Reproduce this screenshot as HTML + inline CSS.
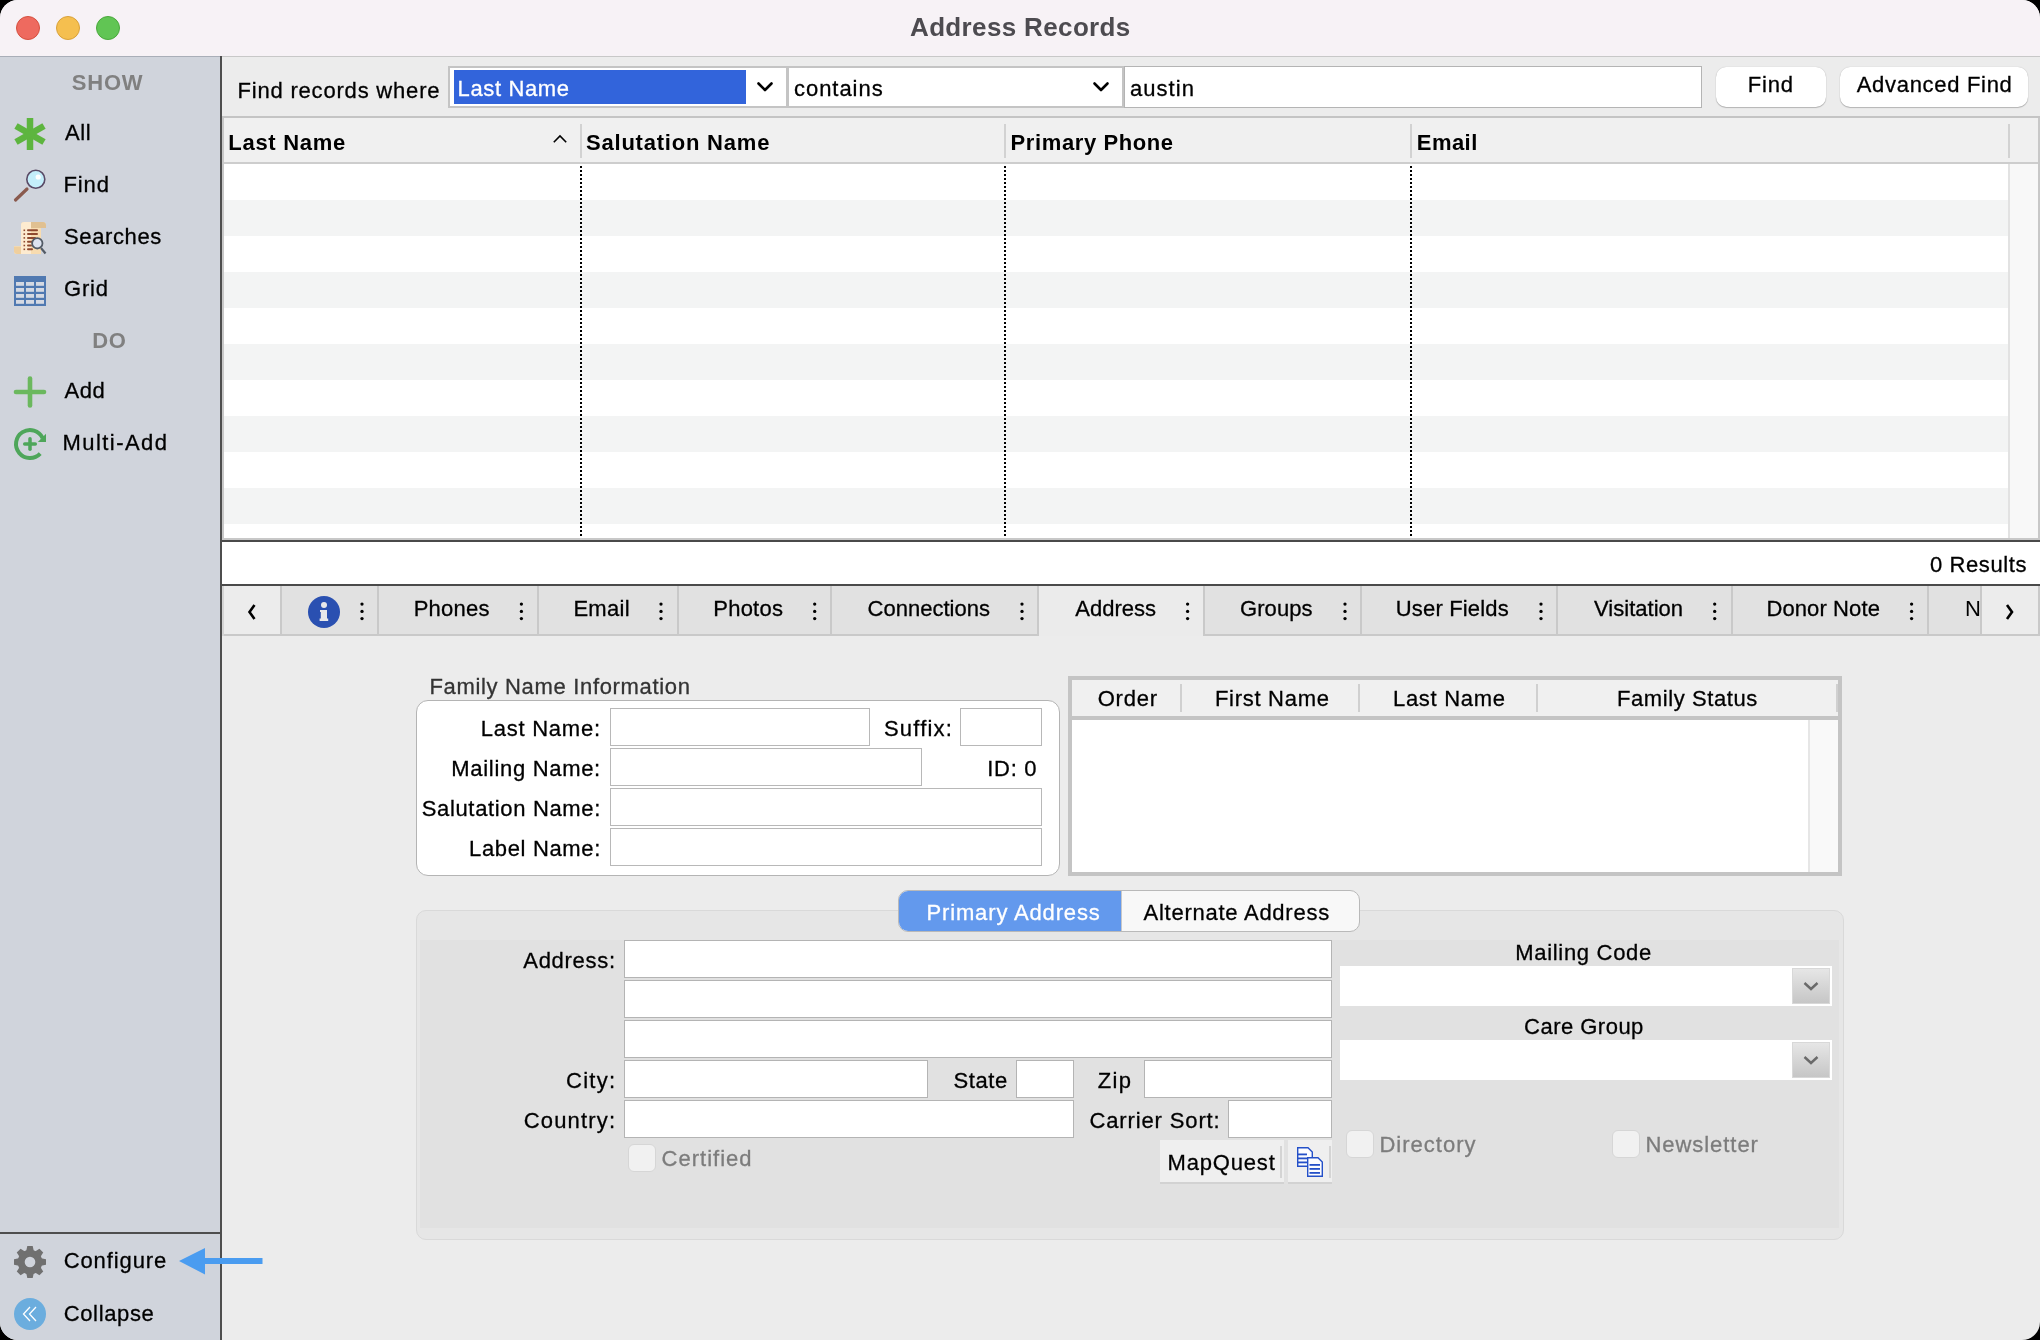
<!DOCTYPE html><html><head><meta charset="utf-8"><style>
html,body{margin:0;padding:0;}
body{width:2040px;height:1340px;background:#000;position:relative;overflow:hidden;font-family:'Liberation Sans',sans-serif;}
#w{position:absolute;left:0;top:0;width:2040px;height:1340px;border-radius:18px;overflow:hidden;background:#ececec;}
</style></head><body><div id="w">
<div style="position:absolute;left:0px;top:0px;width:2040px;height:56px;background:#f7f2f6"></div>
<div style="position:absolute;left:0px;top:56px;width:2040px;height:1px;background:#c8c8c8"></div>
<div style="position:absolute;left:0px;top:56px;width:220px;height:1px;background:#a9aeb8"></div>
<div style="position:absolute;left:16px;top:16px;width:24px;height:24px;border-radius:50%;background:#ee6a5f;box-sizing:border-box;border:1px solid #d5503f"></div>
<div style="position:absolute;left:56px;top:16px;width:24px;height:24px;border-radius:50%;background:#f5bf4f;box-sizing:border-box;border:1px solid #d8a13a"></div>
<div style="position:absolute;left:96px;top:16px;width:24px;height:24px;border-radius:50%;background:#61c554;box-sizing:border-box;border:1px solid #4aa83c"></div>
<div style="position:absolute;left:0px;top:57px;width:220px;height:1283px;background:#d0d4dc"></div>
<div style="position:absolute;left:220px;top:56px;width:2px;height:1284px;background:#4e4e4e"></div>
<div style="position:absolute;left:0px;top:1232px;width:220px;height:2px;background:#4e4e4e"></div>
<div style="position:absolute;left:222px;top:57px;width:1818px;height:59px;background:#ececec"></div>
<div style="position:absolute;left:222px;top:116px;width:1818px;height:2px;background:#c4c4c4"></div>
<div style="position:absolute;left:448px;top:66px;width:340px;height:42px;background:#fff;border:2px solid #c4c4c4;box-sizing:border-box"></div>
<div style="position:absolute;left:787px;top:66px;width:337px;height:42px;background:#fff;border:2px solid #c4c4c4;box-sizing:border-box"></div>
<div style="position:absolute;left:454px;top:70px;width:292px;height:34px;background:#3264db"></div>
<div style="position:absolute;left:1124px;top:66px;width:578px;height:42px;background:#fff;border:1.5px solid #b4b4b4;box-sizing:border-box"></div>
<svg style="position:absolute;left:0;top:0" width="1200" height="120">
<path d="M758.5 83.5 L765 90 L771.5 83.5" fill="none" stroke="#000" stroke-width="2.6" stroke-linecap="round" stroke-linejoin="round"/>
<path d="M1094.5 83.5 L1101 90 L1107.5 83.5" fill="none" stroke="#000" stroke-width="2.6" stroke-linecap="round" stroke-linejoin="round"/>
</svg>
<div style="position:absolute;left:1716px;top:66.5px;width:110px;height:40.5px;background:#fff;border-radius:10px;box-shadow:0 1px 1px rgba(0,0,0,0.22), 0 0 1px rgba(0,0,0,0.25)"></div>
<div style="position:absolute;left:1840px;top:66.5px;width:188px;height:40.5px;background:#fff;border-radius:10px;box-shadow:0 1px 1px rgba(0,0,0,0.22), 0 0 1px rgba(0,0,0,0.25)"></div>
<div style="position:absolute;left:222px;top:118px;width:1818px;height:44px;background:#f0f0f0"></div>
<div style="position:absolute;left:222px;top:162px;width:1818px;height:2px;background:#cdcdcd"></div>
<div style="position:absolute;left:224px;top:164px;width:1784px;height:36px;background:#ffffff"></div>
<div style="position:absolute;left:224px;top:200px;width:1784px;height:36px;background:#f3f4f4"></div>
<div style="position:absolute;left:224px;top:236px;width:1784px;height:36px;background:#ffffff"></div>
<div style="position:absolute;left:224px;top:272px;width:1784px;height:36px;background:#f3f4f4"></div>
<div style="position:absolute;left:224px;top:308px;width:1784px;height:36px;background:#ffffff"></div>
<div style="position:absolute;left:224px;top:344px;width:1784px;height:36px;background:#f3f4f4"></div>
<div style="position:absolute;left:224px;top:380px;width:1784px;height:36px;background:#ffffff"></div>
<div style="position:absolute;left:224px;top:416px;width:1784px;height:36px;background:#f3f4f4"></div>
<div style="position:absolute;left:224px;top:452px;width:1784px;height:36px;background:#ffffff"></div>
<div style="position:absolute;left:224px;top:488px;width:1784px;height:36px;background:#f3f4f4"></div>
<div style="position:absolute;left:224px;top:524px;width:1784px;height:14px;background:#ffffff"></div>
<div style="position:absolute;left:222px;top:118px;width:2px;height:422px;background:#c8c8c8"></div>
<div style="position:absolute;left:2008px;top:164px;width:2px;height:374px;background:#e2e2e2"></div>
<div style="position:absolute;left:2010px;top:164px;width:28px;height:374px;background:#f8f8f8"></div>
<div style="position:absolute;left:2038px;top:118px;width:2px;height:422px;background:#c8c8c8"></div>
<div style="position:absolute;left:580px;top:124px;width:2px;height:34px;background:#d2d2d2"></div>
<div style="position:absolute;left:580px;top:166px;width:2px;height:370px;background:repeating-linear-gradient(180deg,#000 0 2px,transparent 2px 4px)"></div>
<div style="position:absolute;left:1004px;top:124px;width:2px;height:34px;background:#d2d2d2"></div>
<div style="position:absolute;left:1004px;top:166px;width:2px;height:370px;background:repeating-linear-gradient(180deg,#000 0 2px,transparent 2px 4px)"></div>
<div style="position:absolute;left:1410px;top:124px;width:2px;height:34px;background:#d2d2d2"></div>
<div style="position:absolute;left:1410px;top:166px;width:2px;height:370px;background:repeating-linear-gradient(180deg,#000 0 2px,transparent 2px 4px)"></div>
<div style="position:absolute;left:2008px;top:124px;width:2px;height:34px;background:#d2d2d2"></div>
<svg style="position:absolute;left:540px;top:120px" width="40" height="40"><path d="M13.8 22.2 L20 16 L26.2 22.2" fill="none" stroke="#000" stroke-width="1.6"/></svg>
<div style="position:absolute;left:222px;top:538px;width:1818px;height:2px;background:#c8c8c8"></div>
<div style="position:absolute;left:222px;top:540px;width:1818px;height:2px;background:#4a4a4a"></div>
<div style="position:absolute;left:222px;top:542px;width:1818px;height:42px;background:#fff"></div>
<div style="position:absolute;left:222px;top:584px;width:1818px;height:2px;background:#4a4a4a"></div>
<div style="position:absolute;left:222px;top:586px;width:1818px;height:48px;background:#e1e1e1"></div>
<div style="position:absolute;left:222px;top:634px;width:1818px;height:2px;background:#c9c9c9"></div>
<div style="position:absolute;left:224px;top:586px;width:56px;height:48px;background:#ececec"></div>
<div style="position:absolute;left:1982px;top:586px;width:56px;height:48px;background:#ececec"></div>
<div style="position:absolute;left:222px;top:586px;width:2px;height:50px;background:#d4d4d4"></div>
<div style="position:absolute;left:2038px;top:586px;width:2px;height:50px;background:#c9c9c9"></div>
<div style="position:absolute;left:1039px;top:586px;width:164px;height:50px;background:#ebebeb"></div>
<div style="position:absolute;left:280px;top:586px;width:2px;height:48px;background:#c9c9c9"></div>
<div style="position:absolute;left:377px;top:586px;width:2px;height:48px;background:#c9c9c9"></div>
<div style="position:absolute;left:537px;top:586px;width:2px;height:48px;background:#c9c9c9"></div>
<div style="position:absolute;left:677px;top:586px;width:2px;height:48px;background:#c9c9c9"></div>
<div style="position:absolute;left:830px;top:586px;width:2px;height:48px;background:#c9c9c9"></div>
<div style="position:absolute;left:1037px;top:586px;width:2px;height:48px;background:#c9c9c9"></div>
<div style="position:absolute;left:1203px;top:586px;width:2px;height:48px;background:#c9c9c9"></div>
<div style="position:absolute;left:1360px;top:586px;width:2px;height:48px;background:#c9c9c9"></div>
<div style="position:absolute;left:1556px;top:586px;width:2px;height:48px;background:#c9c9c9"></div>
<div style="position:absolute;left:1731px;top:586px;width:2px;height:48px;background:#c9c9c9"></div>
<div style="position:absolute;left:1927px;top:586px;width:2px;height:48px;background:#c9c9c9"></div>
<div style="position:absolute;left:1980px;top:586px;width:2px;height:48px;background:#c9c9c9"></div>
<svg style="position:absolute;left:0;top:0" width="2040" height="640"><g fill="#000"><circle cx="362" cy="604.1" r="1.65"/><circle cx="362" cy="611.4" r="1.65"/><circle cx="362" cy="618.6" r="1.65"/><circle cx="521.4" cy="604.1" r="1.65"/><circle cx="521.4" cy="611.4" r="1.65"/><circle cx="521.4" cy="618.6" r="1.65"/><circle cx="661" cy="604.1" r="1.65"/><circle cx="661" cy="611.4" r="1.65"/><circle cx="661" cy="618.6" r="1.65"/><circle cx="814.7" cy="604.1" r="1.65"/><circle cx="814.7" cy="611.4" r="1.65"/><circle cx="814.7" cy="618.6" r="1.65"/><circle cx="1022" cy="604.1" r="1.65"/><circle cx="1022" cy="611.4" r="1.65"/><circle cx="1022" cy="618.6" r="1.65"/><circle cx="1187.6" cy="604.1" r="1.65"/><circle cx="1187.6" cy="611.4" r="1.65"/><circle cx="1187.6" cy="618.6" r="1.65"/><circle cx="1345" cy="604.1" r="1.65"/><circle cx="1345" cy="611.4" r="1.65"/><circle cx="1345" cy="618.6" r="1.65"/><circle cx="1541" cy="604.1" r="1.65"/><circle cx="1541" cy="611.4" r="1.65"/><circle cx="1541" cy="618.6" r="1.65"/><circle cx="1714.7" cy="604.1" r="1.65"/><circle cx="1714.7" cy="611.4" r="1.65"/><circle cx="1714.7" cy="618.6" r="1.65"/><circle cx="1911.6" cy="604.1" r="1.65"/><circle cx="1911.6" cy="611.4" r="1.65"/><circle cx="1911.6" cy="618.6" r="1.65"/></g></svg>
<svg style="position:absolute;left:0;top:580px" width="2040" height="60">
<path d="M254.5 25 L249.5 32 L254.5 39" fill="none" stroke="#000" stroke-width="2.6"/>
<path d="M2007 25 L2012 32 L2007 39" fill="none" stroke="#000" stroke-width="2.6"/>
<circle cx="324" cy="32" r="16" fill="#2a50b1"/>
<circle cx="324" cy="25" r="3" fill="#e8e8ea"/>
<path d="M320 30 L327 30 L327 38.5 L328.2 38.5 L328.2 41 L319.6 41 L319.6 38.5 L320.8 38.5 L320.8 32 L320 32 Z" fill="#e8e8ea"/>
</svg>
<div style="position:absolute;left:416px;top:700px;width:644px;height:176px;background:#fff;border:1px solid #b4b4b4;border-radius:12px;box-sizing:border-box"></div>
<div style="position:absolute;left:610px;top:708px;width:260px;height:38px;background:#fff;border:1.5px solid #b8b8b8;box-sizing:border-box"></div>
<div style="position:absolute;left:960px;top:708px;width:82px;height:38px;background:#fff;border:1.5px solid #b8b8b8;box-sizing:border-box"></div>
<div style="position:absolute;left:610px;top:748px;width:312px;height:38px;background:#fff;border:1.5px solid #b8b8b8;box-sizing:border-box"></div>
<div style="position:absolute;left:610px;top:788px;width:432px;height:38px;background:#fff;border:1.5px solid #b8b8b8;box-sizing:border-box"></div>
<div style="position:absolute;left:610px;top:828px;width:432px;height:38px;background:#fff;border:1.5px solid #b8b8b8;box-sizing:border-box"></div>
<div style="position:absolute;left:1068px;top:676px;width:774px;height:200px;background:#fff;border:4px solid #c4c4c4;box-sizing:border-box"></div>
<div style="position:absolute;left:1072px;top:680px;width:766px;height:36px;background:#f0f0f0"></div>
<div style="position:absolute;left:1072px;top:716px;width:766px;height:4px;background:#c4c4c4"></div>
<div style="position:absolute;left:1808px;top:720px;width:2px;height:152px;background:#e6e6e6"></div>
<div style="position:absolute;left:1810px;top:720px;width:28px;height:152px;background:#f9f9f9"></div>
<div style="position:absolute;left:1180px;top:684px;width:2px;height:28px;background:#d0d0d0"></div>
<div style="position:absolute;left:1358px;top:684px;width:2px;height:28px;background:#d0d0d0"></div>
<div style="position:absolute;left:1536px;top:684px;width:2px;height:28px;background:#d0d0d0"></div>
<div style="position:absolute;left:1836px;top:684px;width:2px;height:28px;background:#d0d0d0"></div>
<div style="position:absolute;left:416px;top:910px;width:1428px;height:330px;background:#e6e6e6;border:1px solid #d9d9d9;border-radius:10px;box-sizing:border-box"></div>
<div style="position:absolute;left:420px;top:940px;width:1419px;height:288px;background:#e1e1e1"></div>
<div style="position:absolute;left:898px;top:890px;width:462px;height:42px;border-radius:10px;overflow:hidden;box-sizing:border-box;border:1px solid #b9b9b9;background:#f8f8f8"><div style="position:absolute;left:0;top:0;width:223px;height:40px;background:#6399ed"></div></div>
<div style="position:absolute;left:1121px;top:891px;width:1px;height:40px;background:#c8c8c8"></div>
<div style="position:absolute;left:624px;top:940px;width:708px;height:38px;background:#fff;border:1.5px solid #b4b4b4;box-sizing:border-box"></div>
<div style="position:absolute;left:624px;top:980px;width:708px;height:38px;background:#fff;border:1.5px solid #b4b4b4;box-sizing:border-box"></div>
<div style="position:absolute;left:624px;top:1020px;width:708px;height:38px;background:#fff;border:1.5px solid #b4b4b4;box-sizing:border-box"></div>
<div style="position:absolute;left:624px;top:1060px;width:304px;height:38px;background:#fff;border:1.5px solid #b4b4b4;box-sizing:border-box"></div>
<div style="position:absolute;left:1016px;top:1060px;width:58px;height:38px;background:#fff;border:1.5px solid #b4b4b4;box-sizing:border-box"></div>
<div style="position:absolute;left:1144px;top:1060px;width:188px;height:38px;background:#fff;border:1.5px solid #b4b4b4;box-sizing:border-box"></div>
<div style="position:absolute;left:624px;top:1100px;width:450px;height:38px;background:#fff;border:1.5px solid #b4b4b4;box-sizing:border-box"></div>
<div style="position:absolute;left:1228px;top:1100px;width:104px;height:38px;background:#fff;border:1.5px solid #b4b4b4;box-sizing:border-box"></div>
<div style="position:absolute;left:628px;top:1144px;width:28px;height:28px;background:#f1f1f1;border:1px solid #d6d6d6;border-radius:6px;box-sizing:border-box"></div>
<div style="position:absolute;left:1160px;top:1140px;width:124px;height:42px;background:#efefef;box-shadow:0 2px 0 #d2d2d2"></div>
<div style="position:absolute;left:1280px;top:1146px;width:2px;height:32px;background:#d4d4d4"></div>
<div style="position:absolute;left:1288px;top:1140px;width:44px;height:42px;background:#efefef;box-shadow:0 2px 0 #d2d2d2"></div>
<div style="position:absolute;left:1329px;top:1146px;width:2px;height:32px;background:#d4d4d4"></div>
<svg style="position:absolute;left:1290px;top:1140px" width="40" height="44">
<g stroke="#2450c8" stroke-width="1.4" fill="#fbfcff">
<path d="M7.7 7.7 L18 7.7 L22.3 12 L22.3 26.3 L7.7 26.3 Z"/>
<path d="M17.7 17.7 L28 17.7 L32.3 22 L32.3 36.3 L17.7 36.3 Z"/>
</g>
<g fill="#2450c8">
<rect x="8" y="13.5" width="9" height="1.8"/><rect x="8" y="17.5" width="9" height="1.8"/><rect x="8" y="21.5" width="9" height="1.8"/>
<rect x="19.5" y="24" width="10.5" height="1.8"/><rect x="19.5" y="28" width="10.5" height="1.8"/><rect x="19.5" y="32" width="10.5" height="1.8"/>
</g>
</svg>
<div style="position:absolute;left:1340px;top:966px;width:492px;height:40px;background:#fff"></div>
<div style="position:absolute;left:1792px;top:968px;width:38px;height:36px;background:linear-gradient(180deg,#e6e6e6,#c6c6c6);border:1px solid #d8d8d8;box-sizing:border-box"></div>
<svg style="position:absolute;left:1792px;top:968px" width="38" height="36"><path d="M12.5 15 L19 21 L25.5 15" fill="none" stroke="#6a6a6a" stroke-width="2.4"/></svg>
<div style="position:absolute;left:1340px;top:1040px;width:492px;height:40px;background:#fff"></div>
<div style="position:absolute;left:1792px;top:1042px;width:38px;height:36px;background:linear-gradient(180deg,#e6e6e6,#c6c6c6);border:1px solid #d8d8d8;box-sizing:border-box"></div>
<svg style="position:absolute;left:1792px;top:1042px" width="38" height="36"><path d="M12.5 15 L19 21 L25.5 15" fill="none" stroke="#6a6a6a" stroke-width="2.4"/></svg>
<div style="position:absolute;left:1346px;top:1130px;width:28px;height:28px;background:#f1f1f1;border:1px solid #d6d6d6;border-radius:6px;box-sizing:border-box"></div>
<div style="position:absolute;left:1612px;top:1130px;width:28px;height:28px;background:#f1f1f1;border:1px solid #d6d6d6;border-radius:6px;box-sizing:border-box"></div>

<svg style="position:absolute;left:0;top:0" width="270" height="1340">
 <!-- asterisk -->
 <g stroke="#5db53f" stroke-width="6.5">
  <line x1="30" y1="118" x2="30" y2="150"/>
  <line x1="16" y1="126" x2="44" y2="142"/>
  <line x1="16" y1="142" x2="44" y2="126"/>
 </g>
 <!-- magnifier -->
 <line x1="15.5" y1="200" x2="27" y2="189" stroke="#8a5a4e" stroke-width="3.2" stroke-linecap="round"/>
 <circle cx="35.8" cy="179.3" r="9" fill="#c4eefa" stroke="#594a66" stroke-width="1.6"/>
 <circle cx="38.2" cy="177" r="2.6" fill="#fff"/>
 <!-- searches scroll -->
 <path d="M21 225 Q21 222 24.5 222 L43 222 Q46 222 46 225.5 L46 228 L41 228 L41 254 L17 254 Q14 254 14 251 L14 246.5 L21 246.5 Z" fill="#f8dcb0"/>
 <path d="M21 225 Q21 222 24.5 222 L31 222 L31 254 L17 254 Q14 254 14 251 L14 246.5 L21 246.5 Z" fill="#fdebd0"/>
 <path d="M31 222 L43 222 Q46 222 46 225.5 L46 228 L31 228 Z" fill="#e0c091"/>
 <path d="M14 246.5 L21 246.5 L21 254 L17 254 Q14 254 14 251 Z" fill="#efcf9e"/>
 <g fill="#8e4a30">
  <rect x="23.5" y="229.5" width="1.6" height="1.6"/><rect x="27" y="229.3" width="11" height="2" rx="1"/>
  <rect x="23.5" y="233.3" width="1.6" height="1.6"/><rect x="27" y="233.1" width="11" height="2" rx="1"/>
  <rect x="23.5" y="237.1" width="1.6" height="1.6"/><rect x="27" y="236.9" width="9" height="2" rx="1"/>
  <rect x="23.5" y="240.9" width="1.6" height="1.6"/><rect x="27" y="240.7" width="6" height="2" rx="1"/>
  <rect x="23.5" y="244.7" width="1.6" height="1.6"/><rect x="27" y="244.5" width="5" height="2" rx="1"/>
  <rect x="23.5" y="248.5" width="1.6" height="1.6"/><rect x="27" y="248.3" width="6" height="2" rx="1"/>
 </g>
 <line x1="41" y1="248" x2="45.5" y2="253.5" stroke="#535b66" stroke-width="2.2"/>
 <circle cx="37.3" cy="243.3" r="5.2" fill="#dde3f0" stroke="#535b66" stroke-width="1.8"/>
 <!-- grid -->
 <rect x="14" y="276" width="32" height="30" fill="#5079b1"/>
 <g fill="#d5d9e2">
  <rect x="16" y="282" width="8" height="3.8"/><rect x="26" y="282" width="8" height="3.8"/><rect x="36" y="282" width="8" height="3.8"/>
  <rect x="16" y="288" width="8" height="3.8"/><rect x="26" y="288" width="8" height="3.8"/><rect x="36" y="288" width="8" height="3.8"/>
  <rect x="16" y="294" width="8" height="3.8"/><rect x="26" y="294" width="8" height="3.8"/><rect x="36" y="294" width="8" height="3.8"/>
  <rect x="16" y="300" width="8" height="3.8"/><rect x="26" y="300" width="8" height="3.8"/><rect x="36" y="300" width="8" height="3.8"/>
 </g>
 <!-- add -->
 <g stroke="#6bb85e" stroke-width="4.6" stroke-linecap="round">
  <line x1="30" y1="378.5" x2="30" y2="405.5"/><line x1="16" y1="392" x2="44" y2="392"/>
 </g>
 <!-- multi-add -->
 <path d="M42.7 438.1 A14 14 0 1 0 40.2 453.6" fill="none" stroke="#4ea65a" stroke-width="4"/>
 <path d="M46 433.8 L46 442 L37.8 442 Z" fill="#4ea65a"/>
 <g stroke="#4ea65a" stroke-width="3.5" stroke-linecap="round">
  <line x1="30" y1="438.7" x2="30" y2="449.3"/><line x1="24.7" y1="444" x2="35.3" y2="444"/>
 </g>
 <!-- gear -->
 <g transform="translate(30,1262)" fill="#707070">
  <circle r="12.3"/>
  <path d="M-4 -10 L-2.7 -16 L2.7 -16 L4 -10 Z" transform="rotate(0)"/><path d="M-4 -10 L-2.7 -16 L2.7 -16 L4 -10 Z" transform="rotate(45)"/><path d="M-4 -10 L-2.7 -16 L2.7 -16 L4 -10 Z" transform="rotate(90)"/><path d="M-4 -10 L-2.7 -16 L2.7 -16 L4 -10 Z" transform="rotate(135)"/><path d="M-4 -10 L-2.7 -16 L2.7 -16 L4 -10 Z" transform="rotate(180)"/><path d="M-4 -10 L-2.7 -16 L2.7 -16 L4 -10 Z" transform="rotate(225)"/><path d="M-4 -10 L-2.7 -16 L2.7 -16 L4 -10 Z" transform="rotate(270)"/><path d="M-4 -10 L-2.7 -16 L2.7 -16 L4 -10 Z" transform="rotate(315)"/>
  <circle r="5.3" fill="#d0d4dc"/>
 </g>
 <!-- collapse -->
 <circle cx="30" cy="1314" r="16" fill="#6badde"/>
 <path d="M30 1307 L23.5 1314 L30 1321 M36 1307 L29.5 1314 L36 1321" fill="none" stroke="#fff" stroke-width="1.3"/>
 <!-- blue arrow -->
 <path d="M179 1261 L205 1248 L205 1258 L262.5 1258 L262.5 1264 L205 1264 L205 1274.5 Z" fill="#4a9cf0"/>
</svg>

<div style="position:absolute;left:0;top:0;width:2040px;height:1340px;will-change:transform">
<div style="position:absolute;left:910.00px;top:14px;font:bold 26px/26px 'Liberation Sans',sans-serif;color:#4d4b50;white-space:nowrap;letter-spacing:0.357px;">Address Records</div>
<div style="position:absolute;left:71.80px;top:72px;font:bold 22px/22px 'Liberation Sans',sans-serif;color:#808080;white-space:nowrap;letter-spacing:0.800px;">SHOW</div>
<div style="position:absolute;left:92.30px;top:330px;font:bold 22px/22px 'Liberation Sans',sans-serif;color:#808080;white-space:nowrap;letter-spacing:0.600px;">DO</div>
<div style="position:absolute;left:65.00px;top:122px;font:normal 22px/22px 'Liberation Sans',sans-serif;color:#000;white-space:nowrap;letter-spacing:0.550px;-webkit-text-stroke:0.3px currentColor">All</div>
<div style="position:absolute;left:63.40px;top:174px;font:normal 22px/22px 'Liberation Sans',sans-serif;color:#000;white-space:nowrap;letter-spacing:0.900px;-webkit-text-stroke:0.3px currentColor">Find</div>
<div style="position:absolute;left:64.00px;top:226px;font:normal 22px/22px 'Liberation Sans',sans-serif;color:#000;white-space:nowrap;letter-spacing:0.629px;-webkit-text-stroke:0.3px currentColor">Searches</div>
<div style="position:absolute;left:64.00px;top:278px;font:normal 22px/22px 'Liberation Sans',sans-serif;color:#000;white-space:nowrap;letter-spacing:0.833px;-webkit-text-stroke:0.3px currentColor">Grid</div>
<div style="position:absolute;left:64.50px;top:380px;font:normal 22px/22px 'Liberation Sans',sans-serif;color:#000;white-space:nowrap;letter-spacing:0.550px;-webkit-text-stroke:0.3px currentColor">Add</div>
<div style="position:absolute;left:62.50px;top:432px;font:normal 22px/22px 'Liberation Sans',sans-serif;color:#000;white-space:nowrap;letter-spacing:1.450px;-webkit-text-stroke:0.3px currentColor">Multi-Add</div>
<div style="position:absolute;left:63.70px;top:1250px;font:normal 22px/22px 'Liberation Sans',sans-serif;color:#000;white-space:nowrap;letter-spacing:0.900px;-webkit-text-stroke:0.3px currentColor">Configure</div>
<div style="position:absolute;left:63.70px;top:1303px;font:normal 22px/22px 'Liberation Sans',sans-serif;color:#000;white-space:nowrap;letter-spacing:0.643px;-webkit-text-stroke:0.3px currentColor">Collapse</div>
<div style="position:absolute;left:237.50px;top:80px;font:normal 22px/22px 'Liberation Sans',sans-serif;color:#000;white-space:nowrap;letter-spacing:0.806px;-webkit-text-stroke:0.3px currentColor">Find records where</div>
<div style="position:absolute;left:457.50px;top:78px;font:normal 22px/22px 'Liberation Sans',sans-serif;color:#fff;white-space:nowrap;letter-spacing:0.650px;-webkit-text-stroke:0.3px currentColor">Last Name</div>
<div style="position:absolute;left:794.00px;top:78px;font:normal 22px/22px 'Liberation Sans',sans-serif;color:#000;white-space:nowrap;letter-spacing:0.957px;-webkit-text-stroke:0.3px currentColor">contains</div>
<div style="position:absolute;left:1130.00px;top:78px;font:normal 22px/22px 'Liberation Sans',sans-serif;color:#000;white-space:nowrap;letter-spacing:1.040px;-webkit-text-stroke:0.3px currentColor">austin</div>
<div style="position:absolute;left:1747.70px;top:74px;font:normal 22px/22px 'Liberation Sans',sans-serif;color:#000;white-space:nowrap;letter-spacing:0.833px;-webkit-text-stroke:0.3px currentColor">Find</div>
<div style="position:absolute;left:1856.70px;top:74px;font:normal 22px/22px 'Liberation Sans',sans-serif;color:#000;white-space:nowrap;letter-spacing:0.700px;-webkit-text-stroke:0.3px currentColor">Advanced Find</div>
<div style="position:absolute;left:228.30px;top:132px;font:bold 22px/22px 'Liberation Sans',sans-serif;color:#000;white-space:nowrap;letter-spacing:0.712px;">Last Name</div>
<div style="position:absolute;left:586.00px;top:132px;font:bold 22px/22px 'Liberation Sans',sans-serif;color:#000;white-space:nowrap;letter-spacing:0.786px;">Salutation Name</div>
<div style="position:absolute;left:1010.60px;top:132px;font:bold 22px/22px 'Liberation Sans',sans-serif;color:#000;white-space:nowrap;letter-spacing:0.600px;">Primary Phone</div>
<div style="position:absolute;left:1416.80px;top:132px;font:bold 22px/22px 'Liberation Sans',sans-serif;color:#000;white-space:nowrap;letter-spacing:0.450px;">Email</div>
<div style="position:absolute;left:1930.00px;top:554px;font:normal 22px/22px 'Liberation Sans',sans-serif;color:#000;white-space:nowrap;letter-spacing:0.588px;-webkit-text-stroke:0.3px currentColor">0 Results</div>
<div style="position:absolute;left:413.70px;top:598px;font:normal 22px/22px 'Liberation Sans',sans-serif;color:#000;white-space:nowrap;letter-spacing:0.260px;-webkit-text-stroke:0.3px currentColor">Phones</div>
<div style="position:absolute;left:573.40px;top:598px;font:normal 22px/22px 'Liberation Sans',sans-serif;color:#000;white-space:nowrap;letter-spacing:0.300px;-webkit-text-stroke:0.3px currentColor">Email</div>
<div style="position:absolute;left:713.30px;top:598px;font:normal 22px/22px 'Liberation Sans',sans-serif;color:#000;white-space:nowrap;letter-spacing:0.220px;-webkit-text-stroke:0.3px currentColor">Photos</div>
<div style="position:absolute;left:867.50px;top:598px;font:normal 22px/22px 'Liberation Sans',sans-serif;color:#000;white-space:nowrap;letter-spacing:0.010px;-webkit-text-stroke:0.3px currentColor">Connections</div>
<div style="position:absolute;left:1075.30px;top:598px;font:normal 22px/22px 'Liberation Sans',sans-serif;color:#000;white-space:nowrap;letter-spacing:0.000px;-webkit-text-stroke:0.3px currentColor">Address</div>
<div style="position:absolute;left:1240.00px;top:598px;font:normal 22px/22px 'Liberation Sans',sans-serif;color:#000;white-space:nowrap;letter-spacing:0.080px;-webkit-text-stroke:0.3px currentColor">Groups</div>
<div style="position:absolute;left:1395.80px;top:598px;font:normal 22px/22px 'Liberation Sans',sans-serif;color:#000;white-space:nowrap;letter-spacing:0.160px;-webkit-text-stroke:0.3px currentColor">User Fields</div>
<div style="position:absolute;left:1594.00px;top:598px;font:normal 22px/22px 'Liberation Sans',sans-serif;color:#000;white-space:nowrap;letter-spacing:0.022px;-webkit-text-stroke:0.3px currentColor">Visitation</div>
<div style="position:absolute;left:1766.40px;top:598px;font:normal 22px/22px 'Liberation Sans',sans-serif;color:#000;white-space:nowrap;letter-spacing:0.111px;-webkit-text-stroke:0.3px currentColor">Donor Note</div>
<div style="position:absolute;left:429.40px;top:676px;font:normal 22px/22px 'Liberation Sans',sans-serif;color:#333;white-space:nowrap;letter-spacing:0.677px;-webkit-text-stroke:0.3px currentColor">Family Name Information</div>
<div style="position:absolute;left:480.70px;top:718px;font:normal 22px/22px 'Liberation Sans',sans-serif;color:#000;white-space:nowrap;letter-spacing:0.767px;-webkit-text-stroke:0.3px currentColor">Last Name:</div>
<div style="position:absolute;left:884.00px;top:718px;font:normal 22px/22px 'Liberation Sans',sans-serif;color:#000;white-space:nowrap;letter-spacing:1.167px;-webkit-text-stroke:0.3px currentColor">Suffix:</div>
<div style="position:absolute;left:451.30px;top:758px;font:normal 22px/22px 'Liberation Sans',sans-serif;color:#000;white-space:nowrap;letter-spacing:0.692px;-webkit-text-stroke:0.3px currentColor">Mailing Name:</div>
<div style="position:absolute;left:987.30px;top:758px;font:normal 22px/22px 'Liberation Sans',sans-serif;color:#000;white-space:nowrap;letter-spacing:0.675px;-webkit-text-stroke:0.3px currentColor">ID: 0</div>
<div style="position:absolute;left:421.70px;top:798px;font:normal 22px/22px 'Liberation Sans',sans-serif;color:#000;white-space:nowrap;letter-spacing:0.660px;-webkit-text-stroke:0.3px currentColor">Salutation Name:</div>
<div style="position:absolute;left:469.00px;top:838px;font:normal 22px/22px 'Liberation Sans',sans-serif;color:#000;white-space:nowrap;letter-spacing:0.660px;-webkit-text-stroke:0.3px currentColor">Label Name:</div>
<div style="position:absolute;left:1097.70px;top:688px;font:normal 22px/22px 'Liberation Sans',sans-serif;color:#000;white-space:nowrap;letter-spacing:0.775px;-webkit-text-stroke:0.3px currentColor">Order</div>
<div style="position:absolute;left:1214.90px;top:688px;font:normal 22px/22px 'Liberation Sans',sans-serif;color:#000;white-space:nowrap;letter-spacing:0.722px;-webkit-text-stroke:0.3px currentColor">First Name</div>
<div style="position:absolute;left:1393.00px;top:688px;font:normal 22px/22px 'Liberation Sans',sans-serif;color:#000;white-space:nowrap;letter-spacing:0.700px;-webkit-text-stroke:0.3px currentColor">Last Name</div>
<div style="position:absolute;left:1616.90px;top:688px;font:normal 22px/22px 'Liberation Sans',sans-serif;color:#000;white-space:nowrap;letter-spacing:0.600px;-webkit-text-stroke:0.3px currentColor">Family Status</div>
<div style="position:absolute;left:926.50px;top:902px;font:normal 22px/22px 'Liberation Sans',sans-serif;color:#fff;white-space:nowrap;letter-spacing:0.850px;-webkit-text-stroke:0.3px currentColor">Primary Address</div>
<div style="position:absolute;left:1143.50px;top:902px;font:normal 22px/22px 'Liberation Sans',sans-serif;color:#000;white-space:nowrap;letter-spacing:0.750px;-webkit-text-stroke:0.3px currentColor">Alternate Address</div>
<div style="position:absolute;left:523.30px;top:950px;font:normal 22px/22px 'Liberation Sans',sans-serif;color:#000;white-space:nowrap;letter-spacing:0.700px;-webkit-text-stroke:0.3px currentColor">Address:</div>
<div style="position:absolute;left:566.00px;top:1070px;font:normal 22px/22px 'Liberation Sans',sans-serif;color:#000;white-space:nowrap;letter-spacing:1.250px;-webkit-text-stroke:0.3px currentColor">City:</div>
<div style="position:absolute;left:953.40px;top:1070px;font:normal 22px/22px 'Liberation Sans',sans-serif;color:#000;white-space:nowrap;letter-spacing:0.650px;-webkit-text-stroke:0.3px currentColor">State</div>
<div style="position:absolute;left:1097.80px;top:1070px;font:normal 22px/22px 'Liberation Sans',sans-serif;color:#000;white-space:nowrap;letter-spacing:1.300px;-webkit-text-stroke:0.3px currentColor">Zip</div>
<div style="position:absolute;left:523.70px;top:1110px;font:normal 22px/22px 'Liberation Sans',sans-serif;color:#000;white-space:nowrap;letter-spacing:1.186px;-webkit-text-stroke:0.3px currentColor">Country:</div>
<div style="position:absolute;left:1089.40px;top:1110px;font:normal 22px/22px 'Liberation Sans',sans-serif;color:#000;white-space:nowrap;letter-spacing:0.875px;-webkit-text-stroke:0.3px currentColor">Carrier Sort:</div>
<div style="position:absolute;left:661.60px;top:1148px;font:normal 22px/22px 'Liberation Sans',sans-serif;color:#7c7c7c;white-space:nowrap;letter-spacing:1.000px;-webkit-text-stroke:0.3px currentColor">Certified</div>
<div style="position:absolute;left:1167.60px;top:1152px;font:normal 22px/22px 'Liberation Sans',sans-serif;color:#000;white-space:nowrap;letter-spacing:0.814px;-webkit-text-stroke:0.3px currentColor">MapQuest</div>
<div style="position:absolute;left:1515.20px;top:942px;font:normal 22px/22px 'Liberation Sans',sans-serif;color:#000;white-space:nowrap;letter-spacing:0.700px;-webkit-text-stroke:0.3px currentColor">Mailing Code</div>
<div style="position:absolute;left:1524.10px;top:1016px;font:normal 22px/22px 'Liberation Sans',sans-serif;color:#000;white-space:nowrap;letter-spacing:0.478px;-webkit-text-stroke:0.3px currentColor">Care Group</div>
<div style="position:absolute;left:1379.40px;top:1134px;font:normal 22px/22px 'Liberation Sans',sans-serif;color:#7c7c7c;white-space:nowrap;letter-spacing:1.025px;-webkit-text-stroke:0.3px currentColor">Directory</div>
<div style="position:absolute;left:1645.40px;top:1134px;font:normal 22px/22px 'Liberation Sans',sans-serif;color:#7c7c7c;white-space:nowrap;letter-spacing:0.956px;-webkit-text-stroke:0.3px currentColor">Newsletter</div>
<div style="position:absolute;left:1965px;top:598px;font:normal 22px/22px 'Liberation Sans',sans-serif;color:#000;white-space:nowrap;letter-spacing:0px">N</div>
</div>
</div></body></html>
